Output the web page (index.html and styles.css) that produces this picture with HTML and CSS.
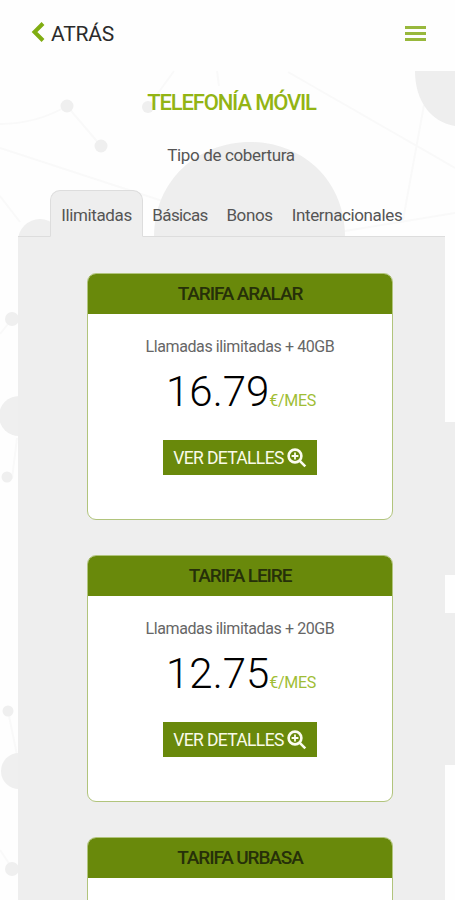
FILE: index.html
```html
<!DOCTYPE html>
<html lang="es">
<head>
<meta charset="utf-8">
<title>Telefonía móvil</title>
<link rel="stylesheet" href="styles.css">
</head>
<body>
<svg class="backdrop" viewBox="0 0 455 900" aria-hidden="true">
  <g class="lines">
    <path d="M0 124Q36 124 67 106L101 146M0 148L190 210M0 196L20 222M148 107L174 71M217 71L219 86M288 72L455 168M424 105L403 220M345 231L455 213M12 479L17 438M0 334L12 319M8 711L17 755M0 850L12 868"/>
  </g>
  <g class="dots">
    <circle cx="67" cy="106" r="6.5"/><circle cx="101" cy="146" r="6.5"/><circle cx="148" cy="107" r="6"/>
    <circle cx="40" cy="241" r="22"/><circle cx="12" cy="319" r="7"/><circle cx="19" cy="416" r="20"/>
    <circle cx="7" cy="477" r="5.5"/><circle cx="8" cy="711" r="5.5"/><circle cx="19" cy="771" r="18"/><circle cx="12" cy="869" r="7"/>
  </g>
  <g class="blobs">
    <path d="M415 71H455V126C431 122 415 101 415 71ZM445 422h10v153h-10zM445 613h10v152h-10z"/>
    <path d="M154 237C154 180 198 142 250 142S345 180 345 237Z"/>
  </g>
</svg>
<header class="topbar">
  <a class="back"><svg width="14" height="22" viewBox="0 0 14 22"><path d="M12 2.5L3.5 11L12 19.5"/></svg><span>ATRÁS</span></a>
  <span class="menu"><i></i><i></i><i></i></span>
</header>
<main>
  <h1><span>TELEFONÍA MÓVIL</span></h1>
  <p class="subtitle">Tipo de cobertura</p>
  <nav class="tabs">
    <a class="tab active t1">Ilimitadas</a><a class="tab t2">Básicas</a><a class="tab t3">Bonos</a><a class="tab t4">Internacionales</a>
  </nav>
  <section class="panel">
    <article class="card">
      <h2>TARIFA ARALAR</h2>
      <p class="desc">Llamadas ilimitadas + 40GB</p>
      <p class="price">16.79<small>€/MES</small></p>
      <a class="button"><span>VER DETALLES</span><svg width="20" height="20" viewBox="0 0 20 20"><circle cx="8" cy="8" r="6.4"/><path d="M12.8 12.8L18.3 18.3"/><path class="plus" d="M8 4.6v6.8M4.6 8h6.8"/></svg></a>
    </article>
    <article class="card">
      <h2>TARIFA LEIRE</h2>
      <p class="desc">Llamadas ilimitadas + 20GB</p>
      <p class="price">12.75<small>€/MES</small></p>
      <a class="button"><span>VER DETALLES</span><svg width="20" height="20" viewBox="0 0 20 20"><circle cx="8" cy="8" r="6.4"/><path d="M12.8 12.8L18.3 18.3"/><path class="plus" d="M8 4.6v6.8M4.6 8h6.8"/></svg></a>
    </article>
    <article class="card cut">
      <h2>TARIFA URBASA</h2>
    </article>
  </section>
</main>
</body>
</html>
```
FILE: styles.css
```css
* { box-sizing: border-box; }
body {
  margin: 0;
  height: 900px;
  overflow: hidden;
  position: relative;
  background: #fefefe;
  font-family: Roboto, "Liberation Sans", sans-serif;
  color: #555;
}
h1, h2, p { margin: 0; font-weight: 400; }
.backdrop { position: absolute; top: 0; left: 0; width: 455px; height: 900px; z-index: -1; }
.lines { fill: none; stroke: #f9f9f9; stroke-width: 2; }
.dots { fill: #efefef; }
.blobs { fill: #eee; }
.topbar {
  height: 71px;
  padding: 0 29px 4px 31px;
  display: flex;
  align-items: center;
  justify-content: space-between;
}
.back { display: flex; align-items: center; gap: 6px; color: #2b2b2b; font-size: 21px; letter-spacing: -.2px; }
.back svg { fill: none; stroke: #80ad12; stroke-width: 4; margin-top: -3px; }
.menu { width: 21px; display: grid; gap: 3px; }
.menu i { height: 3px; background: #98b83c; }
h1 { height: 64px; line-height: 64px; text-align: center; font-size: 22px; font-weight: 500; letter-spacing: -1.15px; color: #93b414; padding-left: 8px; }
.subtitle { height: 42px; line-height: 41px; text-align: center; font-size: 17px; letter-spacing: -.36px; padding-left: 7px; }
.tabs { height: 60px; margin: 0 10px 0 18px; padding-left: 32px; display: flex; align-items: flex-end; border-bottom: 1px solid #ddd; }
.tab { height: 46px; line-height: 49px; text-align: center; font-size: 17px; letter-spacing: -.38px; border: 1px solid transparent; white-space: nowrap; }
.tab.active { height: 47px; margin-bottom: -1px; background: #eee; border-color: #ddd; border-bottom-color: #eee; border-radius: 10px 10px 0 0; }
.t1 { width: 93px; }
.t2 { width: 74px; letter-spacing: -.6px; }
.t3 { width: 65px; }
.t4 { width: 130px; }
.panel { height: 663px; overflow: hidden; margin: 0 10px 0 18px; padding: 36px 51px 0 69px; background: #eee; display: grid; align-content: start; gap: 35px; }
.card {
  height: 247px;
  width: 306px;
  border: 1px solid #b1c47c;
  border-radius: 9px;
  background: #fff;
  overflow: hidden;
  display: flex;
  flex-direction: column;
  align-items: center;
}
.card.cut { height: 63px; border-bottom: 0; border-radius: 9px 9px 0 0; }
.card h2 { width: 100%; height: 40px; line-height: 39px; flex: none; text-align: center; background: #69890b; color: #263009; font-size: 19px; font-weight: 500; letter-spacing: -1.1px; }
.desc { height: 65px; line-height: 65px; flex: none; font-size: 16px; letter-spacing: -.4px; color: #666; white-space: nowrap; }
.price { height: 48px; line-height: 48px; margin-top: -11px; padding-left: 2px; font-size: 42px; font-weight: 300; color: #000; white-space: nowrap; }
.price small { font-size: 16px; font-weight: 400; color: #a0bd35; letter-spacing: -.3px; }
.button { width: 154px; height: 35px; margin-top: 24px; display: flex; align-items: center; justify-content: center; gap: 3px; background: #69890b; color: #f9fbe9; font-size: 17.5px; letter-spacing: -.65px; white-space: nowrap; }
.button svg { fill: none; stroke: #fbfcf0; stroke-width: 2.6; flex: none; }
.button .plus { stroke-width: 1.8; }
```
